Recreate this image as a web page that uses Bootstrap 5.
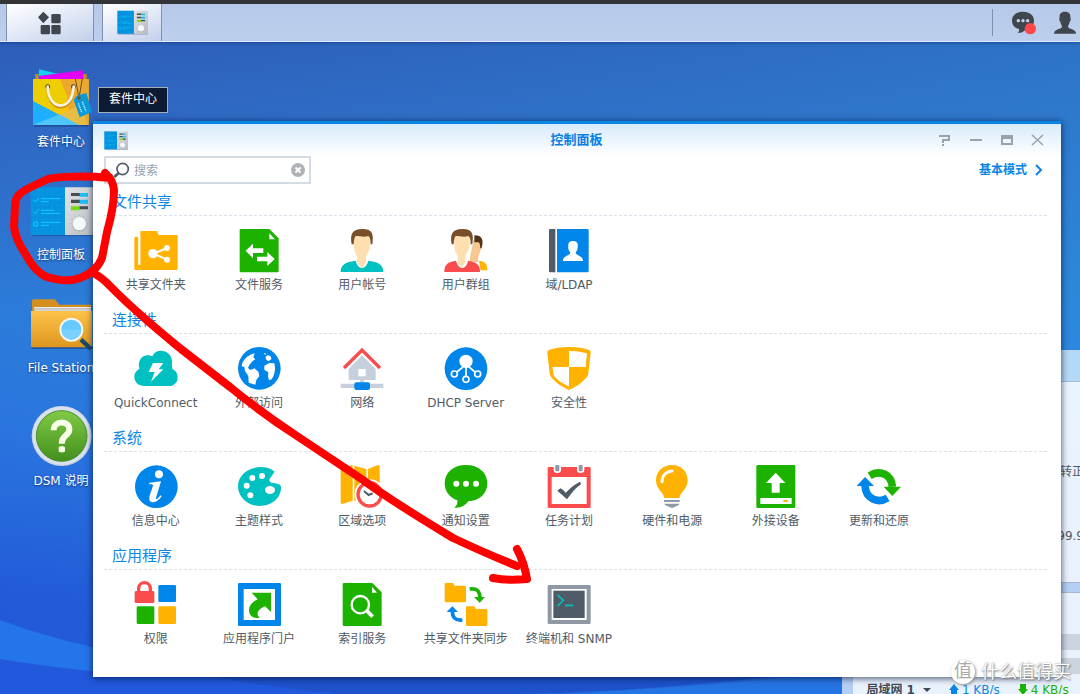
<!DOCTYPE html>
<html lang="zh-CN">
<head>
<meta charset="utf-8">
<meta name="viewport" content="width=device-width, initial-scale=1">
<title>控制面板</title>
<link href="https://cdn.jsdelivr.net/npm/bootstrap@5.3.0/dist/css/bootstrap.min.css" rel="stylesheet">
<script src="https://cdn.jsdelivr.net/npm/bootstrap@5.3.0/dist/js/bootstrap.bundle.min.js"></script>
<style>
body{font-family:"DejaVu Sans","Noto Sans CJK SC",sans-serif;font-size:12px;line-height:16px;color:#505b66;background:#2a6fd6}
a{color:inherit;text-decoration:none}
svg{display:block;overflow:visible}
.desktop{min-height:100vh;isolation:isolate}
.wallpaper{z-index:-1}
.taskbar{height:42px;border-top:4px solid #323437;background:linear-gradient(#b7c9ea,#bccfec);border-bottom:1px solid #dfe8f6;box-shadow:0 1px 3px rgba(10,40,110,.5);padding:0 3px 0 6px}
.task-btn{border:1px solid #8290ab;border-width:0 1px;border-radius:0;padding:0;background:linear-gradient(160deg,#fff,#dbe4f5 60%,#c3d0ea);height:37px}
.start-btn{width:88px}
.app-btn{width:60px}
.tray-rule{width:1px;height:27px;background:#7f90ad}
.shortcuts{padding:25px 0 0 13px;width:109px;gap:30px}
.shortcut{width:96px;color:#fff;text-shadow:0 1px 2px rgba(0,20,70,.7);white-space:nowrap}
.shortcut span{margin-top:3px}
.hint{left:98px;top:87px;border:1px solid #a5adba;background:#0c1a33;color:#fff;padding:3px 10px 5px;z-index:4;line-height:16px}
.panel-win{left:93px;right:19px;top:121px;border-top:3px solid #0a86e6;background:linear-gradient(#d8ebfb,#fff 32px);box-shadow:0 1px 7px rgba(0,15,50,.75);padding:0 12px 14px 11px;z-index:3}
.title-bar{height:32px}
.title-bar h1{font-size:13px;line-height:20px;color:#0a80e2}
.win-tools{margin-right:-4px}
.win-btn{width:31px;height:24px;border:0;padding:0;background:none}
.search-row{margin-bottom:7px}
.search-box{width:207px;height:28px;border:2px solid #d3dbe4;background:#fff;padding:0 4px 0 8px}
.search-box input{border:0;outline:0;font-size:12px;color:#505b66;background:none;min-width:0;padding:1px 0 0 4px}
.search-box input::placeholder{color:#98a2ae}
.mode-link{color:#0a86e6;padding-right:6px}
.group{height:118px}
.group h2{font-size:15px;line-height:22px;height:24px;color:#0a86e6;margin:0;padding-left:8px;font-weight:400}
.dash{height:1px;background:repeating-linear-gradient(90deg,#d9e2ec 0 3px,transparent 3px 5px)}
.tiles{display:grid;grid-template-columns:repeat(9,1fr);margin:13px 15px 0 0;padding:0;list-style:none}
.tiles a{display:flex;flex-direction:column;align-items:center;white-space:nowrap;gap:4px}
.tiles svg{width:44px;height:44px}
.monitor{left:78%;right:0;top:350px;bottom:0;background:#b5cef4;z-index:1;overflow:hidden}
.monitor-head{height:32px;background:#b5d8f4;border-bottom:1px solid #a7bfd6}
.monitor-body{margin:0 -4px 0 11px;background:linear-gradient(#e8f4fe,#e9f1fd);border-bottom:1px solid #a9b7cc;height:201px;padding-top:82px}
.monitor-net{margin:9px 0 0 11px;background:#eaf2fd;border-top:1px solid #a9b7cc;padding-top:41px}
.meter-bar{height:16px;background:#ccd5df;margin-bottom:8px}
.net-row{padding-left:13px;gap:18px;color:#414b55}
.net-row .rate{gap:3px}
.net-row .rate svg{margin-top:2px}
.brand-mark{right:9px;bottom:8px;z-index:5;color:#fff;font-size:18px;line-height:28px;gap:6px;text-shadow:1px 1px 2px #777,0 0 1px #888}
.brand-mark i{width:24px;height:24px;border-radius:50%;background:#fff;color:#aaa;font-size:18px;line-height:22px;text-align:center;box-shadow:1px 1px 3px #888;text-shadow:none}
.ink{left:0;top:0;z-index:6;pointer-events:none}
</style>
</head>
<body>
<svg width="0" height="0" class="position-absolute" aria-hidden="true">
<defs>
<linearGradient id="orange" x1="0" y1="0" x2="0" y2="1"><stop offset="0" stop-color="#ffc34a"/><stop offset="1" stop-color="#dd961f"/></linearGradient>
<linearGradient id="lime" x1="0" y1="0" x2="0" y2="1"><stop offset="0" stop-color="#80ca45"/><stop offset="1" stop-color="#438f1d"/></linearGradient>
<linearGradient id="silver" x1="0" y1="0" x2="1" y2="1"><stop offset="0" stop-color="#e2e4e6"/><stop offset="1" stop-color="#b8bdc2"/></linearGradient>
<symbol id="cp" viewBox="90 50 192 150">
<path fill="#17457f" opacity=".5" d="M97 193h184v6H97z"/>
<path fill="#0795e2" d="M92 52h103v143H92z"/><path fill="url(#silver)" d="M195 52h87v143h-87z"/>
<path stroke="#0786d2" d="M105 52v143M120 52v143M135 52v143M150 52v143M165 52v143M180 52v143M92 66h103M92 81h103M92 96h103M92 111h103M92 126h103M92 141h103M92 156h103M92 171h103"/>
<path fill="none" stroke="#10cdfd" stroke-width="3" d="M100 90l6 6 11-13M100 125l6 6 11-13M101 156h12v12h-12zM123 86h58M123 95h24M123 121h40M123 130h58M123 157h58M123 166h24"/>
<path fill="#474c51" d="M213 69h27v9h-27zM213 89h27v10h-27zM238 109h26v9h-26z"/><path fill="#1bbdf5" d="M239 69h25v11h-25zM239 89h25v12h-25z"/><path fill="#75dc0b" d="M213 109h25v12h-25z"/>
<circle cx="238" cy="161" r="25" fill="none" stroke="#999" stroke-width="3" stroke-dasharray="2 11"/><circle cx="238" cy="163" r="21" fill="#aaa"/><circle cx="238" cy="161" r="20" fill="#f6f9fb"/>
</symbol>
</defs>
</svg>
<div class="desktop position-relative overflow-hidden vh-100">
<svg class="wallpaper position-absolute top-0 start-0 w-100 h-100" viewBox="0 0 1080 694" preserveAspectRatio="none" aria-hidden="true">
<defs><linearGradient id="sky" x1="0" y1="0" x2="0" y2="1"><stop offset="0" stop-color="#2c57b2"/><stop offset=".16" stop-color="#2f66c2"/><stop offset=".45" stop-color="#2c7cd9"/><stop offset=".62" stop-color="#2a75df"/><stop offset=".86" stop-color="#225ad8"/><stop offset="1" stop-color="#2156d6"/></linearGradient>
<linearGradient id="glow"><stop offset="0" stop-color="#2da6e4" stop-opacity="0"/><stop offset="1" stop-color="#2da6e4" stop-opacity=".3"/></linearGradient></defs>
<path fill="url(#sky)" d="M0 0h1080v694H0z"/><path fill="url(#glow)" d="M0 0h1080v694H0z"/>
<path fill="#2474ea" d="M0 620Q80 650 200 666L300 682 220 678Q80 676 0 659z"/>
<path fill="#2158dc" d="M0 659Q100 676 210 677L380 694H0z"/>
<path fill="#1d52cb" d="M200 674L800 674Q620 694 500 694L340 694Q270 688 200 674z"/>
<path fill="#2574e4" d="M560 694Q740 684 842 672V694z"/>
</svg>

<nav class="taskbar d-flex align-items-center" aria-label="任务栏">
<button class="task-btn start-btn d-flex justify-content-center align-items-center" type="button" aria-label="主菜单"><svg width="24" height="24" viewBox="115 32 72 72" fill="#40464d"><path d="M131 34l17 17-17 18-16-18z"/><rect x="155" y="41" width="28" height="28" rx="4"/><rect x="123" y="74" width="28" height="28" rx="4"/><rect x="155" y="74" width="28" height="28" rx="4"/></svg></button>
<button class="task-btn app-btn ms-2 d-flex justify-content-center align-items-center" type="button" aria-label="控制面板"><svg width="31" height="25"><use href="#cp"/></svg></button>
<div class="ms-auto d-flex align-items-center">
<span class="tray-rule"></span>
<button class="btn p-0 border-0 rounded-0 ms-3" type="button" aria-label="通知"><svg width="28" height="26" viewBox="627 32 84 78"><path fill="#40464d" d="M669 37c20 0 33 11 33 27s-13 26-25 27c-6 6-14 10-24 10 4-4 5-7 4-12-13-3-21-12-21-25 0-16 13-27 33-27z"/><g fill="#c6d5ec"><circle cx="655" cy="64" r="5"/><circle cx="669" cy="64" r="5"/><circle cx="683" cy="64" r="5"/></g><circle cx="691" cy="88" r="17" fill="#ff4749"/></svg></button>
<button class="btn p-0 border-0 rounded-0 ms-3" type="button" aria-label="用户"><svg width="24" height="24" viewBox="762 34 72 72"><path fill="#40464d" d="M798 36c13 0 17 7 16 18 2 1 2 9-2 12-1 8-5 10-5 15 0 8 24 5 24 21h-66c0-16 24-13 24-21 0-5-4-7-5-15-4-3-4-11-2-12-1-11 3-18 16-18z"/></svg></button>
</div>
</nav>

<div class="shortcuts d-flex flex-column">
<a href="#" class="shortcut d-flex flex-column align-items-center"><svg width="64" height="64" viewBox="87 201 192 192"><path fill="#16cfed" d="M118 208l70 17-10 15h-64z"/><path fill="#e500fa" d="M116 228l132-17 3 30H116z"/><path fill="#c98c0c" d="M106 222h9v18h-10zM250 222h10v18h-10z"/><path fill="#173f7d" opacity=".6" d="M101 374h165v6H101z"/><path fill="#ffc20a" d="M99 237h167v138H99z"/><path fill="#eca82e" d="M180 237h86v138h-42l-25-65 3-20z"/><path fill="#edce00" d="M99 237h75l28 52-24 52-79-36z"/><path fill="#1fafff" d="M99 303l137 72H99z"/><path fill="#4fc6fa" d="M99 375l80-32 60 32z"/><path fill="#e8bd45" d="M179 343l57-24 30 56h-28z"/><circle cx="143" cy="260" r="7" fill="#574317"/><circle cx="220" cy="260" r="7" fill="#574317"/><path fill="none" stroke="#c99110" stroke-width="8" d="M143 265c2 75 75 75 78 0"/><path fill="none" stroke="#fff4de" stroke-width="8" stroke-linecap="round" d="M143 260c2 75 75 75 78 0"/><path fill="none" stroke="#695321" stroke-width="3" d="M226 236l11 58M247 236l-10 58"/><path fill="#0799da" d="M230 287l29-8 17 57-37 16-18-53z"/><circle cx="237" cy="294" r="5" fill="#74521c"/><path stroke="#c0eeff" stroke-width="4" stroke-dasharray="4 2" d="M235 310l11 29M247 305l11 29"/></svg><span>套件中心</span></a>
<a href="#" class="shortcut d-flex flex-column align-items-center"><svg width="64" height="64" viewBox="87 30 192 192"><use href="#cp" x="90" y="50" width="192" height="150"/></svg><span>控制面板</span></a>
<a href="#" class="shortcut d-flex flex-column align-items-center"><svg width="64" height="64" viewBox="87 9 192 192"><path fill="#173f7d" opacity=".6" d="M95 170h184v7H95z"/><path fill="#d4901f" d="M96 33q0-5 5-5h61q4 0 7 5l9 11h95v30H96z"/><path fill="#eee" d="M103 51h170v14H103z"/><path stroke="#a9a39a" stroke-width="2" d="M103 56h170M103 60h170"/><path fill="url(#orange)" d="M93 63h183v105q0 4-4 4H97q-4 0-4-4z"/><path stroke="#194b66" stroke-width="13" d="M243 149l30 28"/><circle cx="214" cy="119" r="33" fill="#68c9ff" stroke="#f3f7f9" stroke-width="6"/><path fill="#9cdcff" d="M184 119h60a30 30 0 0 1-60 0z" opacity=".4"/></svg><span>File Station</span></a>
<a href="#" class="shortcut d-flex flex-column align-items-center"><svg width="64" height="64" viewBox="87 348 192 192"><circle cx="185" cy="438" r="90" fill="#c5d3e3"/><circle cx="185" cy="437" r="87" fill="#d7e2ee"/><circle cx="185" cy="438" r="76" fill="url(#lime)" stroke="#4b8f2c" stroke-width="3"/><path fill="none" stroke="#f7ffe9" stroke-width="18" d="M161 421c0-32 47-30 47-3 0 22-23 15-23 43"/><rect x="176" y="469" width="19" height="18" rx="5" fill="#f7ffe9"/></svg><span>DSM 说明</span></a>
</div>
<div class="hint position-absolute" role="tooltip">套件中心</div>

<aside class="monitor position-absolute">
<div class="monitor-head"></div>
<div class="monitor-body d-flex flex-column align-items-end gap-5"><span>转正</span><span>99.9</span></div>
<div class="monitor-net"><div class="meter-bar"></div><div class="meter-bar"></div>
<div class="net-row d-flex text-nowrap"><b class="d-flex align-items-center gap-2">局域网 1<svg width="8" height="4" viewBox="0 0 8 4"><path fill="currentColor" d="M0 0h8L4 4z"/></svg></b><span class="rate d-flex" style="color:#0a86e6"><svg width="10" height="12" viewBox="0 0 10 12"><path fill="currentColor" d="M5 0l5 6H8v5H2V6H0z"/></svg>1 KB/s</span><span class="rate d-flex" style="color:#1eb200"><svg width="10" height="12" viewBox="0 0 10 12"><path fill="currentColor" d="M5 11L0 5h2V0h6v5h2z"/></svg>4 KB/s</span></div></div>
</aside>

<main class="panel-win position-absolute">
<header class="title-bar d-flex align-items-center position-relative">
<svg width="24" height="19"><use href="#cp"/></svg>
<h1 class="position-absolute start-50 translate-middle-x m-0 fw-bold">控制面板</h1>
<div class="win-tools ms-auto d-flex">
<button class="win-btn" type="button" aria-label="帮助"><svg width="31" height="24" viewBox="0 0 31 24" fill="none" stroke="#98a2ad" stroke-width="2"><path d="M10 8h10v4h-6v3M13 17h2"/></svg></button>
<button class="win-btn" type="button" aria-label="最小化"><svg width="31" height="24" viewBox="0 0 31 24" stroke="#98a2ad" stroke-width="2"><path d="M10 12h12"/></svg></button>
<button class="win-btn" type="button" aria-label="最大化"><svg width="31" height="24" viewBox="0 0 31 24"><path fill="none" stroke="#98a2ad" stroke-width="2" d="M11 8h10v8H11z"/><path fill="#98a2ad" d="M10 7h12v4H10z"/></svg></button>
<button class="win-btn" type="button" aria-label="关闭"><svg width="31" height="24" viewBox="0 0 31 24" stroke="#98a2ad" stroke-width="1.5"><path d="M10 7l11 10M21 7L10 17"/></svg></button>
</div>
</header>
<div class="search-row d-flex align-items-center justify-content-between">
<label class="search-box d-flex align-items-center"><svg width="16" height="16" viewBox="340 485 48 48" fill="none" stroke="#4f5b66"><circle cx="366" cy="506" r="17" stroke-width="5"/><path stroke-width="8" d="M354 518l-13 12"/></svg><input class="flex-grow-1" type="text" placeholder="搜索" aria-label="搜索"><svg width="14" height="14" viewBox="0 0 14 14"><circle cx="7" cy="7" r="7" fill="#aeb2b6"/><path stroke="#fff" stroke-width="2" d="M4.500 4.500l5 5M9.500 4.500l-5 5"/></svg></label>
<a class="mode-link fw-bold d-flex align-items-center gap-2" href="#">基本模式<svg width="8" height="12" viewBox="0 0 8 12" fill="none" stroke="currentColor" stroke-width="2"><path d="M1 1l5 5-5 5"/></svg></a>
</div>

<section class="group"><h2>文件共享</h2><div class="dash"></div>
<ul class="tiles">
<li><a href="#"><svg viewBox="401 177 132 132"><path fill="#ffb200" d="M420 187q0-4 4-4h46l5 12h53q4 0 4 4v97q0 4-4 4H406q-4 0-4-4v-92q0-4 6-4t6 4v80h6z"/><path stroke="#fff" stroke-width="5" d="M417 195v90"/><path fill="none" stroke="#fff" stroke-width="6" d="M501 234l-42 17 42 18"/><g fill="#fff"><circle cx="458" cy="251" r="14"/><circle cx="500" cy="234" r="9"/><circle cx="500" cy="269" r="9"/></g></svg>共享文件夹</a></li>
<li><a href="#"><svg viewBox="711 177 132 132"><path fill="#1eb200" d="M723 177h85l28 28v98q0 4-4 4H723q-4 0-4-4V181q0-4 4-4z"/><path fill="#fff" d="M808 190v18h17zM737 242l22-21v14h31v14h-31v16zM824 267l-22-21v14h-31v14h31v14z"/></svg>文件服务</a></li>
<li><a href="#"><svg viewBox="91 57 132 132"><path fill="#ffdfb0" d="M132 72h50v30c0 20-10 31-13 37v18l-12 20-15-20v-18c-4-6-10-19-10-37z"/><path fill="#784f28" d="M126 103c-5-29 0-46 33-46 31 0 33 17 29 46h-5c0-14-2-23-8-25-11 5-25 0-37 0-4 4-5 13-6 25z"/><path fill="#00c1c2" d="M138 152c8 29 30 29 38 0 23 4 45 7 45 34H93c0-27 22-30 45-34z"/></svg>用户帐号</a></li>
<li><a href="#"><svg viewBox="401 57 132 132"><path fill="#f8c98e" d="M490 90h22v24c-2 14-6 21-8 24v18h-25v-15z"/><path fill="#50331a" d="M492 76c25 0 28 14 22 39h-4c0-11-2-15-5-18h-13z"/><path fill="#ffb200" d="M506 152c18 1 25 9 25 29h-20z"/><path fill="#ffdfb0" stroke="#fff" stroke-width="4" d="M430 72h50v30c0 20-10 31-13 37v18l-12 20-15-20v-18c-4-6-10-19-10-37z"/><path fill="#784f28" d="M424 103c-5-29 0-46 33-46 31 0 33 17 29 46h-5c0-14-2-23-8-25-11 5-25 0-37 0-4 4-5 13-6 25z"/><path fill="#fa4b4d" d="M437 152c8 29 30 29 36 0 22 4 37 9 36 34H402c0-27 15-30 35-34z"/></svg>用户群组</a></li>
<li><a href="#"><svg viewBox="711 57 132 132"><path fill="#4f5b66" d="M721 57h15v130h-15q-4 0-4-4V61q0-4 4-4z"/><path fill="#0086ea" d="M741 57h91q4 0 4 4v122q0 4-4 4h-91z"/><path fill="#fff" d="M789 93c11 0 16 6 14 17 1 8-3 13-6 17 0 11 22 8 22 26h-60c0-18 22-15 22-26-4-4-7-9-6-17-2-11 3-17 14-17z"/></svg>域/LDAP</a></li>
</ul></section>

<section class="group"><h2>连接性</h2><div class="dash"></div>
<ul class="tiles">
<li><a href="#"><svg viewBox="401 171 132 132"><path fill="#00c1c2" d="M433 288c-19 0-31-12-31-27 0-13 7-20 15-25-7-29 14-48 39-37 12-28 60-19 59 17-1 10 1 14 1 21 11 6 16 13 16 26 0 15-12 25-26 25z"/><path fill="#fff" d="M458 219h31l-14 19h14l-37 37 11-29h-18z"/></svg>QuickConnect</a></li>
<li><a href="#"><svg viewBox="711 171 132 132"><circle cx="778" cy="235" r="64" fill="#0086ea"/><path fill="#fff" d="M764 190l-4 12 6 6-8 5-10 12-4 9 8 6 11-5 12 10 3 13-9 12-3 14-20-6-1-20-10-15-2-12-8-2c2-19 17-33 39-39zM791 188l7 3-2 5zM796 201l8-6 9 5 1 8-9 6-6-5zM793 227l15-8 15 1c4 17 2 33-8 48l-8 3-3-12 1-12-12-8z"/></svg>外部访问</a></li>
<li><a href="#"><svg viewBox="91 411 132 132"><path fill="#c6d0dc" d="M157 436l41 41v33h-35v11h58v13H93v-13h58v-11h-34v-33zM146 477v22h22v-22z" fill-rule="evenodd"/><path fill="none" stroke="#fa4b4d" stroke-width="10" d="M103 474l54-54 54 54"/><rect x="134" y="517" width="47" height="23" rx="6" fill="#0086ea"/></svg>网络</a></li>
<li><a href="#"><svg viewBox="401 411 132 132"><circle cx="467" cy="476" r="64" fill="#0086ea"/><g fill="none" stroke="#fff" stroke-width="5"><path d="M459 470l-19 16M467 468v32M475 470l19 16"/><circle cx="432" cy="492" r="9"/><circle cx="467" cy="508" r="9"/><circle cx="502" cy="492" r="9"/></g><circle cx="467" cy="454" r="20" fill="#fff"/></svg>DHCP Server</a></li>
<li><a href="#"><svg viewBox="711 411 132 132"><path fill="#ffb200" d="M777 411c25 0 44 3 62 10q4 2 3 8l-7 61c-2 19-38 42-58 50-20-8-56-31-58-50l-7-61q-1-6 3-8c18-7 37-10 62-10z"/><path fill="#fff" d="M777 422q28 0 54 8l-4 41h-50zM727 471h50v58c-15-6-43-23-46-34z"/></svg>安全性</a></li>
</ul></section>

<section class="group"><h2>系统</h2><div class="dash"></div>
<ul class="tiles">
<li><a href="#"><svg viewBox="101 135 132 132"><circle cx="168" cy="200" r="64" fill="#0086ea"/><circle cx="176" cy="163" r="12" fill="#fff"/><path fill="#fff" d="M147 188l35-4-15 50c-1 6 7 3 13-8l4 3c-12 20-36 24-37 9-1-12 10-33 11-42-1-4-5-3-12-3z"/></svg>信息中心</a></li>
<li><a href="#"><svg viewBox="411 135 132 132"><path fill="#00c1c2" d="M524 155c-39-31-110-7-110 44 0 31 27 59 65 59 37 0 65-25 64-57-1-10-13-11-28-13-8-1-9-9-4-14z"/><g fill="#fff"><circle cx="440" cy="197" r="9"/><circle cx="457" cy="174" r="9"/><circle cx="486" cy="168" r="9"/><circle cx="451" cy="226" r="9"/><ellipse cx="510" cy="210" rx="15" ry="12"/></g></svg>主题样式</a></li>
<li><a href="#"><svg viewBox="721 135 132 132"><path fill="#ffb200" d="M723 145l36-10v107l-31 10q-5 0-5-5zM764 137l36 10v100l-36-5zM805 147l30-12q5 0 5 5v90l-35 15z"/><circle cx="810" cy="223" r="45" fill="#fff"/><circle cx="810" cy="223" r="35" fill="#fff" stroke="#fa4b4d" stroke-width="10"/><path fill="none" stroke="#4f5b66" stroke-width="6" d="M793 213l14 12 12-5"/></svg>区域选项</a></li>
<li><a href="#"><svg viewBox="131 75 132 132"><path fill="#1eb200" d="M197 75c38 0 64 23 64 55 0 30-23 53-57 54-9 12-21 21-42 19 8-6 10-13 9-22-22-7-38-26-38-51 0-32 26-55 64-55z"/><g fill="#fff"><circle cx="168" cy="131" r="9"/><circle cx="197" cy="131" r="9"/><circle cx="227" cy="131" r="9"/></g></svg>通知设置</a></li>
<li><a href="#"><svg viewBox="441 75 132 132"><rect x="443" y="81" width="129" height="123" rx="4" fill="#fa4b4d"/><path fill="#fff" d="M455 111h105v81H455zM461 75h22v15q0 9-11 9t-11-9zM531 75h22v15q0 9-11 9t-11-9z"/><rect x="466" y="75" width="12" height="19" rx="3" fill="#8f99a6"/><rect x="536" y="75" width="12" height="19" rx="3" fill="#8f99a6"/><path fill="#4f5b66" d="M472 152l9-7 8 4 8 9c14-14 26-25 43-33l3 8c-15 9-27 25-42 45z"/></svg>任务计划</a></li>
<li><a href="#"><svg viewBox="751 75 132 132"><path fill="#ffb200" d="M817 75c29 0 47 21 47 46 0 26-20 33-25 53h-45c-5-20-25-27-25-53 0-25 19-46 48-46z"/><path fill="none" stroke="#fff" stroke-width="9" stroke-linecap="round" d="M787 125c0-17 11-30 30-32"/><path fill="#8f99a6" d="M793 180h47v6h-47zM793 191h47q-4 7-15 9-8 7-16 0-11-2-16-9z"/></svg>硬件和电源</a></li>
<li><a href="#"><svg viewBox="161 75 132 132"><rect x="168" y="75" width="117" height="129" rx="4" fill="#1eb200"/><path fill="#fff" d="M226 98l29 31h-17v29h-24v-29h-17zM180 174h94v18h-94z"/><path fill="#ffb200" d="M249 180h13v6h-13z"/></svg>外接设备</a></li>
<li><a href="#"><svg viewBox="471 75 132 132"><path fill="none" stroke="#1eb200" stroke-width="23" d="M509 107c32-20 66-2 68 33"/><path fill="#1eb200" d="M551 140h52l-26 28z"/><path fill="none" stroke="#0086ea" stroke-width="23" d="M563 174c-31 18-66 2-68-37"/><path fill="#0086ea" d="M470 138h52l-27-27z"/></svg>更新和还原</a></li>
</ul></section>

<section class="group"><h2>应用程序</h2><div class="dash"></div>
<ul class="tiles">
<li><a href="#"><svg viewBox="101 489 132 132"><rect x="103" y="513" width="59" height="36" rx="4" fill="#fa4b4d"/><path fill="none" stroke="#fa4b4d" stroke-width="10" d="M115 515v-9c0-24 35-24 35 0v9"/><rect x="174" y="495" width="53" height="51" rx="4" fill="#0086ea"/><rect x="109" y="559" width="53" height="53" rx="4" fill="#1eb200"/><rect x="174" y="559" width="53" height="53" rx="4" fill="#ffb200"/></svg>权限</a></li>
<li><a href="#"><svg viewBox="411 489 132 132"><rect x="414" y="489" width="129" height="129" rx="4" fill="#0086ea"/><path fill="#fff" d="M431 507h94v93h-94z"/><path fill="#1eb200" d="M455 518h58v58l-18-17c-17 8-31 20-16 34-18 5-32-6-32-22 0-17 13-27 26-33z"/></svg>应用程序门户</a></li>
<li><a href="#"><svg viewBox="721 489 132 132"><path fill="#1eb200" d="M733 489h85l28 28v97q0 4-4 4H733q-4 0-4-4V493q0-4 4-4z"/><path fill="#fff" d="M817 500v18h15z"/><circle cx="782" cy="554" r="26" fill="none" stroke="#fff" stroke-width="7"/><path stroke="#fff" stroke-width="11" d="M800 571l19 19"/></svg>索引服务</a></li>
<li><a href="#"><svg viewBox="131 429 132 132"><path fill="#ffb200" d="M137 429h20q4 0 5 8h31q4 0 4 4v42q0 4-4 4h-56q-4 0-4-4v-50q0-4 4-4zM201 499h20q4 0 5 8h31q4 0 4 4v43q0 4-4 4h-56q-4 0-4-4v-51q0-4 4-4z"/><path fill="none" stroke="#1eb200" stroke-width="11" d="M208 447c21-3 30 5 31 27"/><path fill="#1eb200" d="M221 471h33l-16 17z"/><path fill="none" stroke="#0086ea" stroke-width="11" d="M186 540c-21 2-30-7-30-28"/><path fill="#0086ea" d="M139 516h34l-17-17z"/></svg>共享文件夹同步</a></li>
<li><a href="#"><svg viewBox="441 429 132 132"><rect x="443" y="435" width="129" height="117" rx="4" fill="#8f99a6"/><path fill="#fff" d="M455 447h105v93H455z"/><path fill="#4f5b66" d="M460 452h94v82h-94z"/><path fill="none" stroke="#00c1c2" stroke-width="5" d="M473 465l17 16-17 17M495 496h24"/></svg>终端机和 SNMP</a></li>
</ul></section>
</main>

<div class="brand-mark position-absolute d-flex align-items-center"><i class="fst-normal">值</i>什么值得买</div>
<svg class="ink position-absolute" width="540" height="600" viewBox="0 0 540 600" fill="none" stroke="#f00" stroke-width="8" stroke-linecap="round" stroke-linejoin="round" aria-hidden="true">
<path d="M105 173l5 5C90 176 60 176 48 179L31 187C18 193 15 198 15 206L14 227C15 236 20 246 26 255C32 266 39 274 47 277C60 281 72 281 80 278C91 274 98 268 102 258L107 232C111 218 114 205 114 190Q113 180 106 174"/>
<path d="M95 274C103 278 108 284 114 290C138 314 158 330 181 349L230 387Q263 414 297 436L363 480C390 500 420 518 453 538Q487 554 517 566"/>
<path d="M517 549Q524 562 527 579Q508 581 493 578"/>
</svg>
</div>
</body>
</html>
